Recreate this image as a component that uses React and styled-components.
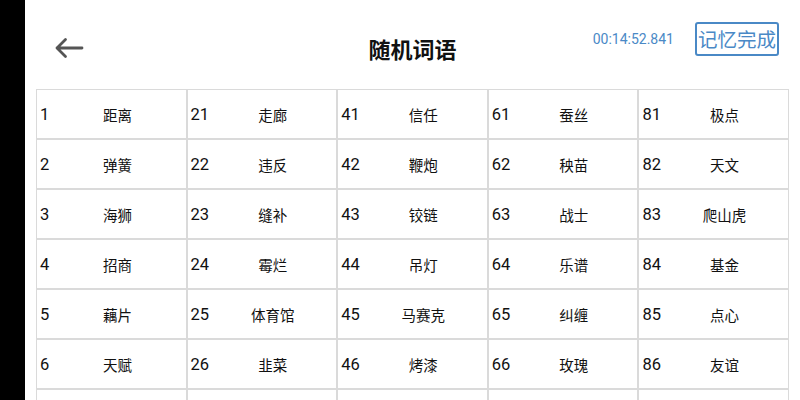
import React from "react";
import styled, { createGlobalStyle } from "styled-components";

const GlobalStyle = createGlobalStyle`
  html, body {
    margin: 0;
    padding: 0;
    background: #ffffff;
  }
  body {
    font-family: Roboto, "Noto Sans CJK SC", sans-serif;
    overflow: hidden;
  }
`;

const Screen = styled.div`
  display: flex;
  width: 800px;
  height: 400px;
  overflow: hidden;
  background: #ffffff;
`;

const EdgeBar = styled.div`
  width: 25px;
  flex-shrink: 0;
  background: #000000;
`;

const Main = styled.div`
  flex: 1;
  display: flex;
  flex-direction: column;
  min-width: 0;
`;

const Header = styled.div`
  display: grid;
  grid-template-columns: 1fr auto 1fr;
  flex-shrink: 0;
  height: 89px;
  box-sizing: border-box;
  padding-top: 6px;
`;

const BackButton = styled.div`
  display: flex;
  align-items: center;
  padding-left: 29px;
  color: #555555;
`;

const Title = styled.div`
  display: flex;
  align-items: center;
  font-family: "Noto Sans CJK SC", sans-serif;
  font-size: 22px;
  font-weight: 700;
  color: #111111;
`;

const Actions = styled.div`
  display: flex;
  align-items: center;
  justify-content: flex-end;
  gap: 21px;
  align-self: start;
  margin-top: 16px;
  padding-right: 21px;
`;

const Timer = styled.span`
  font-family: Roboto, sans-serif;
  font-size: 14px;
  color: #4a89c6;
`;

const DoneButton = styled.div`
  border: 2px solid #4a89c6;
  border-radius: 3px;
  padding: 0 1px;
  height: 30px;
  line-height: 30px;
  font-family: "Noto Sans CJK SC", sans-serif;
  font-size: 19.5px;
  color: #4a89c6;
`;

const Table = styled.div`
  display: grid;
  grid-template-columns: repeat(5, 1fr);
  grid-auto-rows: 50px;
  flex-shrink: 0;
  margin: 0 11px;
`;

const Cell = styled.div`
  display: flex;
  align-items: center;
  box-sizing: border-box;
  border: 1px solid #dadada;
  padding-left: 3px;
  color: #111111;
`;

const Num = styled.span`
  font-family: Roboto, sans-serif;
  font-size: 16.5px;
`;

const Word = styled.span`
  flex: 1;
  text-align: center;
  font-family: "Noto Sans CJK SC", sans-serif;
  font-size: 14.5px;
`;

const columns = [
  ["距离", "弹簧", "海狮", "招商", "藕片", "天赋"],
  ["走廊", "违反", "缝补", "霉烂", "体育馆", "韭菜"],
  ["信任", "鞭炮", "铰链", "吊灯", "马赛克", "烤漆"],
  ["蚕丝", "秧苗", "战士", "乐谱", "纠缠", "玫瑰"],
  ["极点", "天文", "爬山虎", "基金", "点心", "友谊"],
];

const ArrowIcon = () => (
  <svg width="30" height="22" viewBox="0 0 30 22" fill="none">
    <path
      d="M28 11H3M11.5 2.5L3 11l8.5 8.5"
      stroke="currentColor"
      strokeWidth="2.8"
      strokeLinecap="round"
      strokeLinejoin="round"
    />
  </svg>
);

export default function App() {
  const rows = columns[0].map((_, r) => r);
  return (
    <>
      <GlobalStyle />
      <Screen>
        <EdgeBar />
        <Main>
          <Header>
            <BackButton>
              <ArrowIcon />
            </BackButton>
            <Title>随机词语</Title>
            <Actions>
              <Timer>00:14:52.841</Timer>
              <DoneButton>记忆完成</DoneButton>
            </Actions>
          </Header>
          <Table>
            {rows.map((r) =>
              columns.map((col, c) => (
                <Cell key={`${r}-${c}`}>
                  <Num>{c * 20 + r + 1}</Num>
                  <Word>{col[r]}</Word>
                </Cell>
              ))
            )}
            {/* next row, only its top edge shows */}
            {columns.map((_, c) => (
              <Cell key={`tail-${c}`} />
            ))}
          </Table>
        </Main>
      </Screen>
    </>
  );
}
